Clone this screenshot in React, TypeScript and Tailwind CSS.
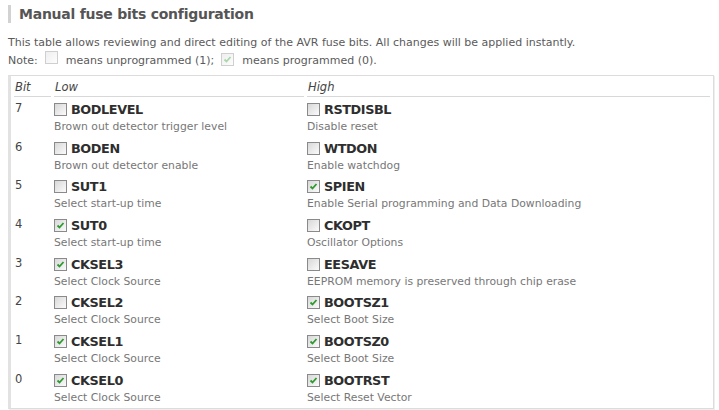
import React from 'react';

interface Fuse {
  name: string;
  desc: string;
  on: boolean;
}

interface FuseRow {
  bit: number;
  low: Fuse;
  high: Fuse;
}

const rows: FuseRow[] = [
  { bit: 7, low: { name: 'BODLEVEL', desc: 'Brown out detector trigger level', on: false }, high: { name: 'RSTDISBL', desc: 'Disable reset', on: false } },
  { bit: 6, low: { name: 'BODEN', desc: 'Brown out detector enable', on: false }, high: { name: 'WTDON', desc: 'Enable watchdog', on: false } },
  { bit: 5, low: { name: 'SUT1', desc: 'Select start-up time', on: false }, high: { name: 'SPIEN', desc: 'Enable Serial programming and Data Downloading', on: true } },
  { bit: 4, low: { name: 'SUT0', desc: 'Select start-up time', on: true }, high: { name: 'CKOPT', desc: 'Oscillator Options', on: false } },
  { bit: 3, low: { name: 'CKSEL3', desc: 'Select Clock Source', on: true }, high: { name: 'EESAVE', desc: 'EEPROM memory is preserved through chip erase', on: false } },
  { bit: 2, low: { name: 'CKSEL2', desc: 'Select Clock Source', on: false }, high: { name: 'BOOTSZ1', desc: 'Select Boot Size', on: true } },
  { bit: 1, low: { name: 'CKSEL1', desc: 'Select Clock Source', on: true }, high: { name: 'BOOTSZ0', desc: 'Select Boot Size', on: true } },
  { bit: 0, low: { name: 'CKSEL0', desc: 'Select Clock Source', on: true }, high: { name: 'BOOTRST', desc: 'Select Reset Vector', on: true } },
];

const Box: React.FC<{ on: boolean; faded?: boolean }> = ({ on, faded }) => (
  <span
    className={`inline-flex items-center justify-center w-[13px] h-[13px] border border-[#8a8a8a] bg-gradient-to-br from-[#d8d8d8] to-[#fbfbfb] shrink-0 ${
      faded ? 'opacity-40' : ''
    }`}
  >
    {on && (
      <svg width="9" height="9" viewBox="0 0 9 9">
        <path d="M1.5 4.5 L3.5 6.5 L7.5 2" fill="none" stroke="#2f9a2f" strokeWidth="1.8" />
      </svg>
    )}
  </span>
);

const FuseCell: React.FC<{ fuse: Fuse }> = ({ fuse }) => (
  <div className="h-[38.7px] pt-[4px]">
    <div className="flex items-center gap-[4px] h-[17px]">
      <Box on={fuse.on} />
      <span className="text-[12.8px] tracking-[-0.4px] font-bold text-[#2e2e2e]">{fuse.name}</span>
    </div>
    <div className="text-[10.8px] leading-[17px] text-[#777]">{fuse.desc}</div>
  </div>
);

export default function App() {
  return (
    <div className="w-[719px] h-[410px] bg-white font-['DejaVu_Sans',Verdana,sans-serif] text-[#555] overflow-hidden">
      <div className="pt-[5px] pl-[8px]">
        <div className="flex items-center h-[18px] border-l-[3px] border-[#d2d2d2] pl-[8px]">
          <h1 className="text-[14px] tracking-[-0.25px] font-bold text-[#555]">Manual fuse bits configuration</h1>
        </div>
      </div>
      <div className="pl-[8px] pt-[11px] text-[11px] leading-[17px] text-[#5a5a5a]">
        <p>This table allows reviewing and direct editing of the AVR fuse bits. All changes will be applied instantly.</p>
        <p className="flex items-center">
          Note:
          <span className="ml-[7px] mr-[8px]"><Box on={false} faded /></span>
          means unprogrammed (1);
          <span className="ml-[7px] mr-[8px]"><Box on={true} faded /></span>
          means programmed (0).
        </p>
      </div>
      <div className="mt-[6px] ml-[8px] w-[706px] border border-[#dcdcdc] border-l-[3px] border-l-[#e2e2e2] shadow-[1px_1px_0_#eee] px-[3px] pb-[1px]">
        <div className="grid grid-cols-[37px_250px_1fr] gap-x-[3px]">
          <div className="h-[21px] pt-[3px] pl-[1px] border-b border-[#d8d8d8] italic text-[11.5px] text-[#444]">Bit</div>
          <div className="h-[21px] pt-[3px] pl-[1px] border-b border-[#d8d8d8] italic text-[11.5px] text-[#444]">Low</div>
          <div className="h-[21px] pt-[3px] pl-[1px] border-b border-[#d8d8d8] italic text-[11.5px] text-[#444]">High</div>
          {rows.map((r) => (
            <React.Fragment key={r.bit}>
              <div className="h-[38.7px] pt-[3px] pl-[1px] text-[11.5px] text-[#444]">{r.bit}</div>
              <FuseCell fuse={r.low} />
              <FuseCell fuse={r.high} />
            </React.Fragment>
          ))}
        </div>
      </div>
    </div>
  );
}
